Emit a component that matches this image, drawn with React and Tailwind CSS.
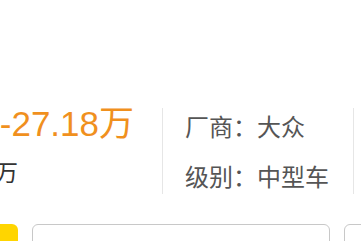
export default function App() {
  const cjk = { fontFamily: '"Liberation Sans", "Noto Sans CJK SC", sans-serif' };
  return (
    <div className="w-[361px] h-[241px] overflow-hidden bg-white" style={cjk}>
      <div className="h-[108px]" />
      <div className="flex h-[86px]">
        <div className="w-[162px] shrink-0 overflow-hidden flex flex-col items-end">
          <div className="whitespace-nowrap text-[35px] leading-[35px] text-[#f0901e] mr-[28px] mt-[-2px]">
            18.59-27.18万
          </div>
          <div className="whitespace-nowrap text-[23px] leading-[23px] text-[#333] mr-[144px] mt-[21px]">
            指导价：18.59-27.18万
          </div>
        </div>
        <div className="w-px bg-[#e6e6e6] shrink-0" />
        <div className="flex flex-col pl-[22px] text-[24px] leading-[24px] text-[#555] w-[190px] shrink-0">
          <div className="mt-[8px] whitespace-nowrap">厂商：大众</div>
          <div className="mt-[26px] whitespace-nowrap">级别：中型车</div>
        </div>
        <div className="w-px bg-[#e6e6e6] shrink-0" />
      </div>
      <div className="flex gap-[14px] mt-[30px]">
        <div className="w-[18px] h-[30px] bg-[#ffd500] rounded-tr-[6px] shrink-0" />
        <div className="w-[298px] h-[30px] border border-[#c8c8c8] rounded-[6px] shrink-0" />
        <div className="w-[120px] h-[30px] border border-[#c8c8c8] rounded-[6px] shrink-0" />
      </div>
    </div>
  );
}
